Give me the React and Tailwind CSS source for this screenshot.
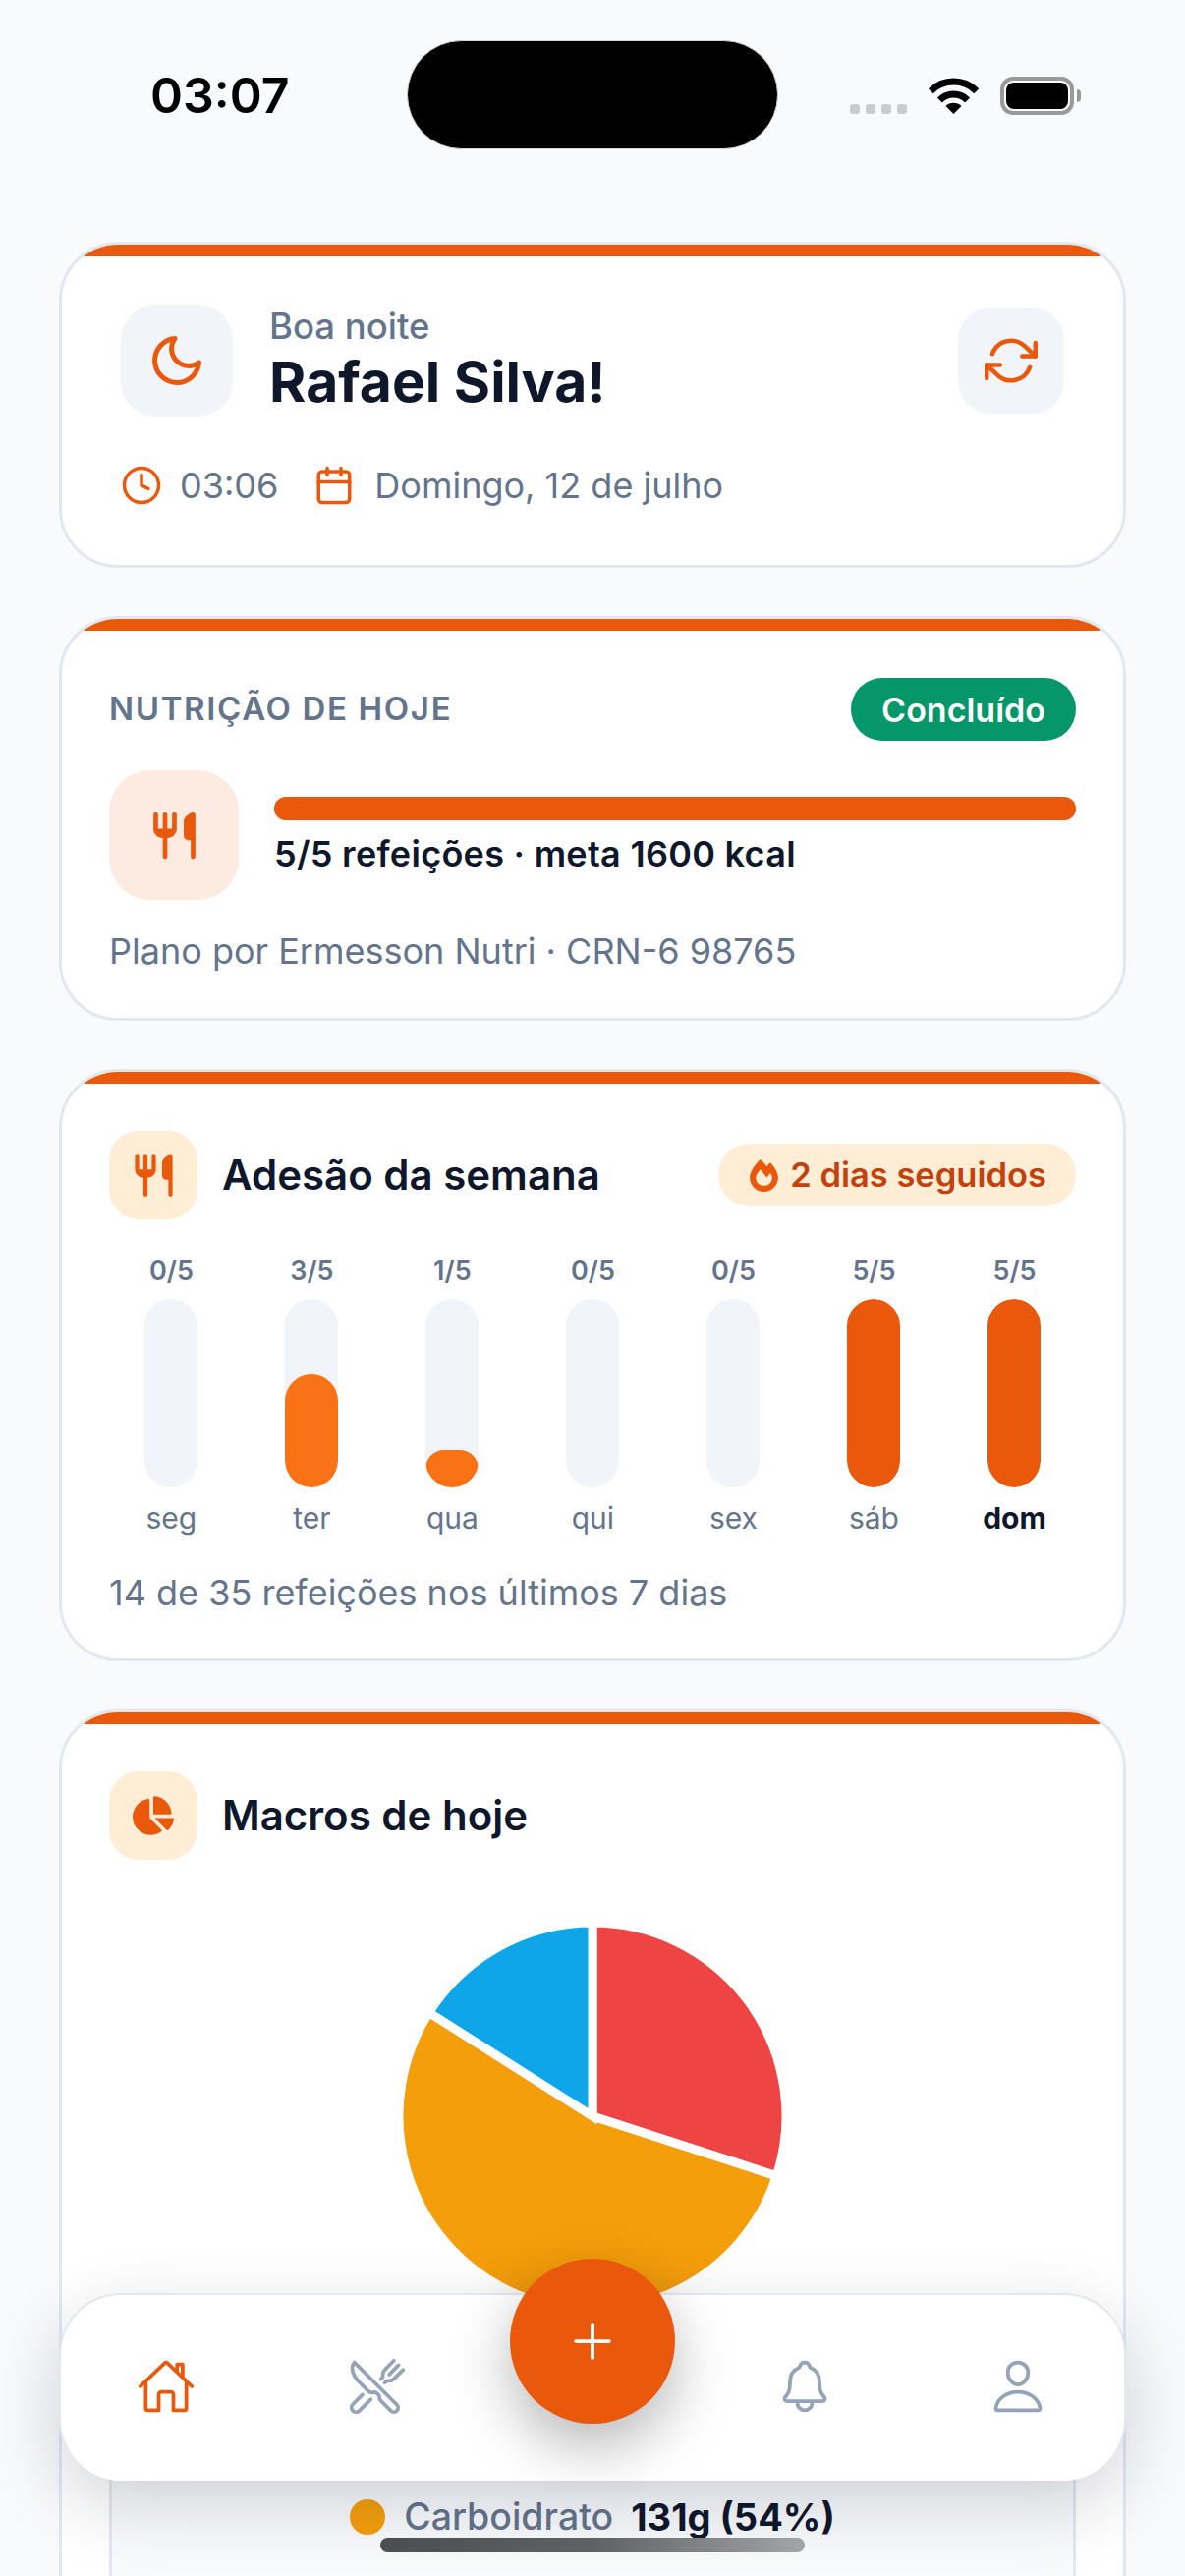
import React from "react";
import { FiMoon, FiRefreshCw, FiClock, FiCalendar } from "react-icons/fi";
import {
    IoHomeOutline,
    IoRestaurantOutline,
    IoNotificationsOutline,
    IoPersonOutline,
    IoAdd,
} from "react-icons/io5";
import { FaChartPie, FaFireAlt } from "react-icons/fa";

const WEEK = [
    { day: "seg", count: 0 },
    { day: "ter", count: 3 },
    { day: "qua", count: 1 },
    { day: "qui", count: 0 },
    { day: "sex", count: 0 },
    { day: "sáb", count: 5 },
    { day: "dom", count: 5, today: true },
];

const MACROS = [
    { share: 0.3, color: "#ef4444" },
    { share: 0.54, color: "#f59e0b" },
    { share: 0.16, color: "#0ea5e9" },
];

const polar = (c, r, turn) => {
    const a = turn * 2 * Math.PI;
    return [c + r * Math.sin(a), c - r * Math.cos(a)];
};

const RestaurantIcon = ({ size }) => (
    <svg width={size} height={size} viewBox="0 0 24 24" fill="currentColor">
        <path d="M16 6v6c0 1.1.9 2 2 2h1v7c0 .55.45 1 1 1s1-.45 1-1V3.13c0-.65-.61-1.13-1.24-.98C17.6 2.68 16 4.51 16 6zm-5 3H9V3c0-.55-.45-1-1-1s-1 .45-1 1v6H5V3c0-.55-.45-1-1-1s-1 .45-1 1v6c0 2.21 1.79 4 4 4v8c0 .55.45 1 1 1s1-.45 1-1v-8c2.21 0 4-1.79 4-4V3c0-.55-.45-1-1-1s-1 .45-1 1v6z" />
    </svg>
);

function MacroPie() {
    const c = 200;
    const r = 197;
    let start = 0;
    return (
        <svg width="400" height="400" viewBox="0 0 400 400">
            {MACROS.map((m) => {
                const end = start + m.share;
                const [x1, y1] = polar(c, r, start);
                const [x2, y2] = polar(c, r, end);
                const large = m.share > 0.5 ? 1 : 0;
                start = end;
                return (
                    <path
                        key={m.color}
                        d={`M${c} ${c}L${x1} ${y1}A${r} ${r} 0 ${large} 1 ${x2} ${y2}Z`}
                        fill={m.color}
                        stroke="#ffffff"
                        strokeWidth="9"
                    />
                );
            })}
        </svg>
    );
}

function StatusBar() {
    return (
        <div className="h-[246px] pt-[41px] flex items-start">
            <div className="w-[414px] h-[111px] pl-[153px] flex items-center text-[50px] font-semibold text-black leading-none">
                03:07
            </div>
            <div className="w-[378px] h-[111px] rounded-full bg-black border border-[#d8d8d8]" />
            <div className="flex-1 h-[111px] pl-[73px] flex items-start">
                <div className="flex gap-[6px] mt-[65px]">
                    <span className="w-[10px] h-[10px] rounded-[3px] bg-[#cccccc]" />
                    <span className="w-[10px] h-[10px] rounded-[3px] bg-[#cccccc]" />
                    <span className="w-[10px] h-[10px] rounded-[3px] bg-[#cccccc]" />
                    <span className="w-[10px] h-[10px] rounded-[3px] bg-[#cccccc]" />
                </div>
                <svg className="ml-[22px] mt-[38px]" width="51" height="37" viewBox="0 0 51 37">
                    <path d="M2.2 13.7A33 33 0 0 1 48.8 13.7" fill="none" stroke="#000" strokeWidth="7" />
                    <path d="M11.4 22.9A20 20 0 0 1 39.6 22.9" fill="none" stroke="#000" strokeWidth="7" />
                    <path d="M17.5 29L25.5 37L33.5 29A11.3 11.3 0 0 0 17.5 29Z" fill="#000" />
                </svg>
                <div className="ml-[22px] mt-[37px] w-[75px] h-[39px] rounded-[13px] border-[4px] border-[#999999] p-[2px]">
                    <div className="w-full h-full rounded-[8px] bg-black" />
                </div>
                <div className="ml-[3px] mt-[50px] w-[4px] h-[13px] rounded-r-[4px] bg-[#999999]" />
            </div>
        </div>
    );
}

const Card = ({ className = "", children }) => (
    <div className="bg-white border-[3px] border-[#e2e8f0] rounded-[60px] overflow-hidden">
        <div className="h-[12px] bg-[#ea580c]" />
        <div className={className}>{children}</div>
    </div>
);

function GreetingCard() {
    return (
        <Card className="pt-[49px] px-[60px] pb-[57px]">
            <div className="flex items-center justify-between">
                <div className="flex items-center gap-[37px]">
                    <div className="w-[114px] h-[114px] rounded-[36px] bg-[#f1f5f9] flex items-center justify-center text-[#ea580c]">
                        <FiMoon size={60} />
                    </div>
                    <div>
                        <div className="text-[36.5px] leading-[44px] font-medium text-[#64748b]">Boa noite</div>
                        <div className="text-[57px] leading-[70px] font-bold text-[#0f172a]">Rafael Silva!</div>
                    </div>
                </div>
                <div className="w-[108px] h-[108px] rounded-[33px] bg-[#f1f5f9] flex items-center justify-center text-[#ea580c]">
                    <FiRefreshCw size={54} />
                </div>
            </div>
            <div className="mt-[46px] h-[48px] flex items-center text-[36px] text-[#64748b]">
                <FiClock size={42} className="text-[#ea580c]" />
                <span className="ml-[18px]">03:06</span>
                <FiCalendar size={42} className="text-[#ea580c] ml-[36px]" />
                <span className="ml-[20px]">Domingo, 12 de julho</span>
            </div>
        </Card>
    );
}

function NutritionCard() {
    return (
        <Card className="pt-[48px] px-[48px] pb-[44px]">
            <div className="flex items-center justify-between">
                <span className="text-[33px] font-semibold tracking-[0.05em] text-[#64748b]">NUTRIÇÃO DE HOJE</span>
                <span className="h-[64px] px-[31px] rounded-full bg-[#059669] flex items-center text-[34px] font-semibold text-white">
                    Concluído
                </span>
            </div>
            <div className="mt-[30px] flex items-start gap-[36px]">
                <div className="w-[132px] h-[132px] rounded-[42px] bg-[#fdeae0] flex items-center justify-center text-[#ea580c]">
                    <RestaurantIcon size={57} />
                </div>
                <div className="flex-1 pt-[27px]">
                    <div className="h-[24px] rounded-[12px] bg-[#ea580c]" />
                    <div className="mt-[12px] text-[36px] leading-[44px] font-semibold tracking-[0.28px] text-[#0f172a]">
                        5/5 refeições · meta 1600 kcal
                    </div>
                </div>
            </div>
            <div className="mt-[28px] text-[36px] leading-[48px] text-[#64748b]">
                Plano por Ermesson Nutri · CRN-6 98765
            </div>
        </Card>
    );
}

function WeekCard() {
    return (
        <Card className="pt-[48px] px-[48px] pb-[45px]">
            <div className="flex items-center">
                <div className="w-[90px] h-[90px] rounded-[30px] bg-[#ffedd5] flex items-center justify-center text-[#ea580c]">
                    <RestaurantIcon size={51} />
                </div>
                <span className="ml-[25px] mb-[2px] flex-1 text-[42px] font-semibold text-[#0f172a]">Adesão da semana</span>
                <span className="h-[64px] pl-[30px] pr-[30px] rounded-full bg-[#ffedd5] flex items-center gap-[10px] text-[34.5px] font-semibold text-[#c2410c]">
                    <FaFireAlt size={33} className="text-[#ea580c]" />
                    2 dias seguidos
                </span>
            </div>
            <div className="mt-[37px] pl-[0.9px] grid grid-cols-7 gap-[18px]">
                {WEEK.map((d) => (
                    <div key={d.day} className="flex flex-col items-center">
                        <div className="h-[32px] leading-[32px] text-[27px] font-semibold text-[#64748b]">{d.count}/5</div>
                        <div className="mt-[12px] w-[54px] h-[192px] rounded-[27px] bg-[#f1f5f9] flex items-end overflow-hidden">
                            {d.count > 0 && (
                                <div
                                    className={`w-full rounded-[27px] ${d.count === 5 ? "bg-[#ea580c]" : "bg-[#f97316]"}`}
                                    style={{ height: `${(d.count / 5) * 100}%` }}
                                />
                            )}
                        </div>
                        <div
                            className={`mt-[11px] h-[40px] leading-[40px] text-[30px] ${
                                d.today ? "font-bold text-[#0f172a]" : "text-[#64748b]"
                            }`}
                        >
                            {d.day}
                        </div>
                    </div>
                ))}
            </div>
            <div className="mt-[34px] text-[36px] leading-[44px] text-[#64748b]">14 de 35 refeições nos últimos 7 dias</div>
        </Card>
    );
}

function MacrosCard() {
    return (
        <Card className="pt-[48px] px-[48px] pb-[48px]">
            <div className="flex items-center">
                <div className="w-[90px] h-[90px] rounded-[30px] bg-[#ffedd5] flex items-center justify-center text-[#ea580c]">
                    <FaChartPie size={42} />
                </div>
                <span className="ml-[25px] mb-[2px] text-[42px] font-semibold text-[#0f172a]">Macros de hoje</span>
            </div>
            <div className="mt-[61px] flex justify-center">
                <MacroPie />
            </div>
            <div className="mt-[46px] h-[300px] pt-[137px] rounded-[36px] border-[3px] border-[#e2e8f0] bg-[#f8fafc] flex justify-center">
                <div className="h-[44px] flex items-center">
                    <span className="w-[36px] h-[36px] rounded-full bg-[#f59e0b]" />
                    <span className="ml-[19px] text-[37.5px] font-medium text-[#64748b]">Carboidrato</span>
                    <span className="ml-[18px] text-[38px] font-bold text-[#0f172a]">131g (54%)</span>
                </div>
            </div>
        </Card>
    );
}

function NavBar() {
    return (
        <div className="absolute left-[60px] right-[60px] bottom-[97px] h-[191px] rounded-[63px] bg-white border-[2px] border-[#e2e8f0] border-b-0 shadow-[0_24px_72px_rgba(15,23,42,0.18)] grid grid-cols-5 grid-rows-[185px] items-center justify-items-center text-[#94a3b8]">
            <IoHomeOutline size={60} className="text-[#ea580c] mr-[2px]" />
            <IoRestaurantOutline size={60} className="mr-[5px]" />
            <div className="mb-[92px] w-[168px] h-[168px] rounded-full bg-[#ea580c] flex items-center justify-center text-white shadow-[0_24px_60px_rgba(0,0,0,0.28)]">
                <IoAdd size={60} />
            </div>
            <IoNotificationsOutline size={60} />
            <IoPersonOutline size={60} />
        </div>
    );
}

export default function App() {
    return (
        <div className="relative w-[1206px] h-[2622px] overflow-hidden bg-[#f8fafc] font-['Inter',sans-serif]">
            <StatusBar />
            <div className="px-[60px] flex flex-col gap-[49px]">
                <GreetingCard />
                <NutritionCard />
                <WeekCard />
                <MacrosCard />
            </div>
            <NavBar />
            <div className="absolute left-[387px] top-[2583px] w-[432px] h-[15px] rounded-[8px] bg-linear-to-r from-[#4b4d50] via-[#5f6164] to-[#a3a5a9]" />
        </div>
    );
}
